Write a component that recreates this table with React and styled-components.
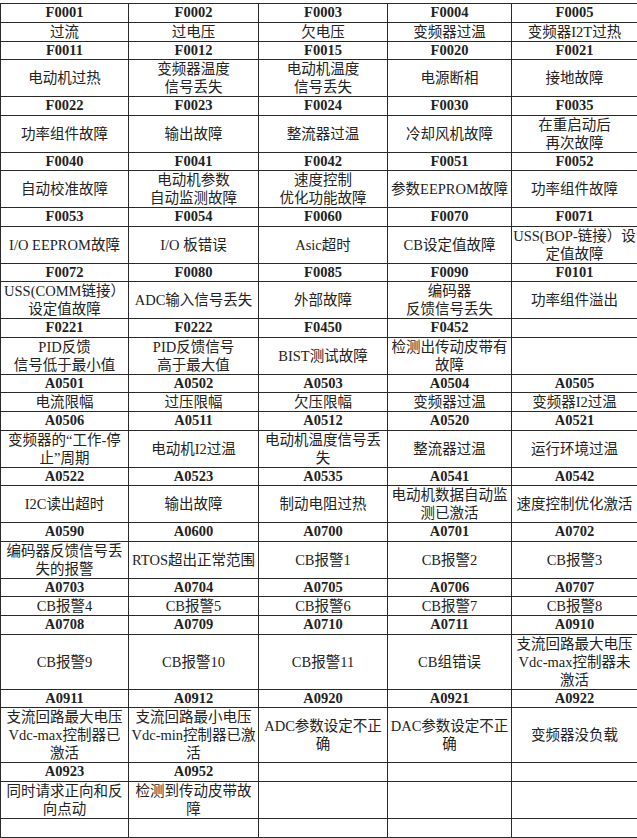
import styled, { createGlobalStyle } from 'styled-components'

const GlobalStyle = createGlobalStyle`
  html, body {
    margin: 0;
    padding: 0;
    background: #fff;
  }
  body {
    width: 637px;
    overflow: hidden;
  }
`

const colWidths = [128, 130, 129, 124, 126]

// each block: 5 codes, then 5 descriptions (lines split by "|")
const blocks = [
  [['F0001', 'F0002', 'F0003', 'F0004', 'F0005'], ['过流', '过电压', '欠电压', '变频器过温', '变频器I2T过热']],
  [['F0011', 'F0012', 'F0015', 'F0020', 'F0021'], ['电动机过热', '变频器温度|信号丢失', '电动机温度|信号丢失', '电源断相', '接地故障']],
  [['F0022', 'F0023', 'F0024', 'F0030', 'F0035'], ['功率组件故障', '输出故障', '整流器过温', '冷却风机故障', '在重启动后|再次故障']],
  [['F0040', 'F0041', 'F0042', 'F0051', 'F0052'], ['自动校准故障', '电动机参数|自动监测故障', '速度控制|优化功能故障', '参数EEPROM故障', '功率组件故障']],
  [['F0053', 'F0054', 'F0060', 'F0070', 'F0071'], ['I/O EEPROM故障', 'I/O 板错误', 'Asic超时', 'CB设定值故障', 'USS(BOP-链接）设|定值故障']],
  [['F0072', 'F0080', 'F0085', 'F0090', 'F0101'], ['USS(COMM链接）|设定值故障', 'ADC输入信号丢失', '外部故障', '编码器|反馈信号丢失', '功率组件溢出']],
  [['F0221', 'F0222', 'F0450', 'F0452', ''], ['PID反馈|信号低于最小值', 'PID反馈信号|高于最大值', 'BIST测试故障', '检测出传动皮带有|故障', '']],
  [['A0501', 'A0502', 'A0503', 'A0504', 'A0505'], ['电流限幅', '过压限幅', '欠压限幅', '变频器过温', '变频器I2过温']],
  [['A0506', 'A0511', 'A0512', 'A0520', 'A0521'], ['变频器的“工作-停|止”周期', '电动机I2过温', '电动机温度信号丢|失', '整流器过温', '运行环境过温']],
  [['A0522', 'A0523', 'A0535', 'A0541', 'A0542'], ['I2C读出超时', '输出故障', '制动电阻过热', '电动机数据自动监|测已激活', '速度控制优化激活']],
  [['A0590', 'A0600', 'A0700', 'A0701', 'A0702'], ['编码器反馈信号丢|失的报警', 'RTOS超出正常范围', 'CB报警1', 'CB报警2', 'CB报警3']],
  [['A0703', 'A0704', 'A0705', 'A0706', 'A0707'], ['CB报警4', 'CB报警5', 'CB报警6', 'CB报警7', 'CB报警8']],
  [['A0708', 'A0709', 'A0710', 'A0711', 'A0910'], ['CB报警9', 'CB报警10', 'CB报警11', 'CB组错误', '支流回路最大电压|Vdc-max控制器未|激活']],
  [['A0911', 'A0912', 'A0920', 'A0921', 'A0922'], ['支流回路最大电压|Vdc-max控制器已|激活', '支流回路最小电压|Vdc-min控制器已激|活', 'ADC参数设定不正|确', 'DAC参数设定不正|确', '变频器没负载']],
  [['A0923', 'A0952', '', '', ''], ['同时请求正向和反|向点动', '检测到传动皮带故|障', '', '', '']],
]

const App = () => {
  return (
    <>
      <GlobalStyle />
      <Page>
        <FaultTable>
          <colgroup>
            {colWidths.map((w, k) => (
              <Col key={k} $w={w} />
            ))}
          </colgroup>
          <tbody>
            {blocks.map(([codes, texts], i) => (
              <Block key={i} codes={codes} texts={texts} />
            ))}
            <tr>
              {colWidths.map((_, k) => (
                <TextCell key={k}>&nbsp;</TextCell>
              ))}
            </tr>
          </tbody>
        </FaultTable>
      </Page>
    </>
  )
}

const Block = ({ codes, texts }) => (
  <>
    <tr>
      {codes.map((c, k) => (
        <CodeCell key={k}>{c || '\u00a0'}</CodeCell>
      ))}
    </tr>
    <tr>
      {texts.map((t, k) => (
        <TextCell key={k}>
          {t ? t.split('|').map((line, j) => <Line key={j}>{line}</Line>) : '\u00a0'}
        </TextCell>
      ))}
    </tr>
  </>
)

const Page = styled.div`
  padding-top: 3px;
  width: 637px;
`

const FaultTable = styled.table`
  width: 637px;
  table-layout: fixed;
  border-collapse: collapse;
  font-family: "Liberation Serif", "Noto Sans CJK SC", serif;
  color: #222;
`

const Col = styled.col`
  width: ${props => props.$w}px;
`

const CodeCell = styled.td`
  border: 1px solid #2a2a2a;
  padding: 0;
  height: 17.5px;
  line-height: 17.5px;
  text-align: center;
  vertical-align: middle;
  font-weight: bold;
  font-size: 14.5px;
`

const TextCell = styled.td`
  border: 1px solid #2a2a2a;
  padding: 0;
  line-height: 18px;
  text-align: center;
  vertical-align: middle;
  font-size: 14.5px;
  overflow: hidden;
`

const Line = styled.div`
  white-space: nowrap;
`

export default App
